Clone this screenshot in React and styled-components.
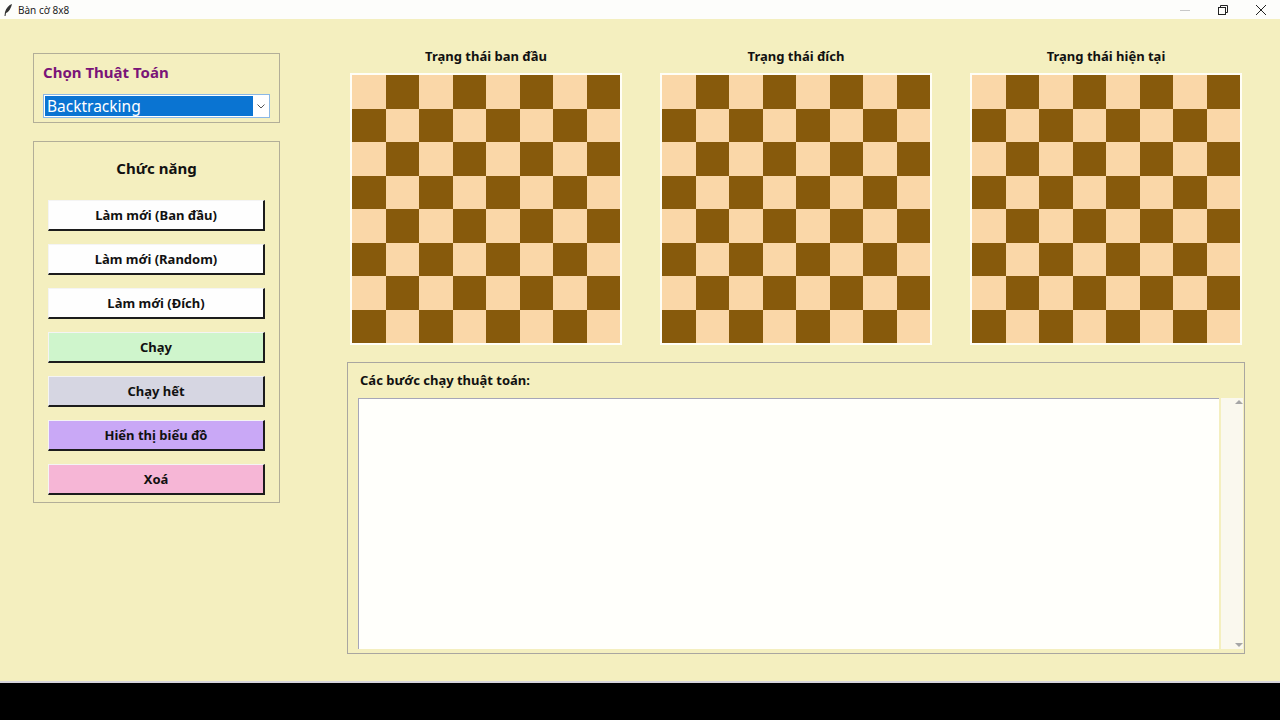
import React from "react";
import styled, { createGlobalStyle } from "styled-components";

const GlobalStyle = createGlobalStyle`
  html, body {
    margin: 0;
    padding: 0;
    background: #000;
  }
  body {
    font-family: "Noto Sans", "Open Sans", sans-serif;
  }
`;

const Window = styled.div`
  width: 1280px;
  height: 720px;
  display: flex;
  flex-direction: column;
  overflow: hidden;
`;

const TitleBar = styled.div`
  height: 19px;
  background: #fdfdfb;
  display: flex;
  align-items: center;
  padding-left: 3px;
  font-family: "Noto Sans", sans-serif;
  font-size: 10px;
  color: #222;
`;

const TitleText = styled.span`
  margin-left: 5px;
`;

const WinControls = styled.div`
  margin-left: auto;
  display: flex;
  height: 100%;
`;

const WinBtn = styled.div`
  width: 38px;
  display: flex;
  align-items: center;
  justify-content: center;
  color: ${(p) => (p.$dim ? "#c8c8c8" : "#222")};
`;

const Body = styled.div`
  height: 662px;
  background: #f4efbf;
  display: flex;
  align-items: flex-start;
`;

const Footer = styled.div`
  height: 37px;
  background: #000;
  border-top: 2px solid #d6d4dc;
`;

const LeftCol = styled.div`
  margin: 34px 0 0 33px;
  width: 247px;
  display: flex;
  flex-direction: column;
  gap: 18px;
`;

const Frame = styled.div`
  border: 1px solid #b2ae98;
  box-sizing: border-box;
`;

const AlgoFrame = styled(Frame)`
  height: 70px;
  padding: 8px 8px 0 9px;
`;

const AlgoLabel = styled.div`
  color: #7a1478;
  font-weight: 700;
  font-size: 15px;
  line-height: 20px;
`;

const Combo = styled.div`
  margin-top: 12px;
  margin-right: 1px;
  height: 24px;
  box-sizing: border-box;
  border: 1px solid #8ab8e6;
  background: #fff;
  display: flex;
  padding: 1px;
`;

const ComboValue = styled.div`
  flex: 1;
  background: #0a74d2;
  color: #fff;
  font-size: 15.5px;
  line-height: 20px;
  padding-left: 2px;
`;

const ComboArrow = styled.div`
  width: 15px;
  display: flex;
  align-items: center;
  justify-content: center;
`;

const FuncFrame = styled(Frame)`
  height: 362px;
  padding: 0 14px;
  display: flex;
  flex-direction: column;
`;

const FuncTitle = styled.div`
  text-align: center;
  font-weight: 700;
  font-size: 15px;
  color: #111;
  margin-top: 15px;
  line-height: 22px;
  height: 43px;
`;

const Buttons = styled.div`
  display: flex;
  flex-direction: column;
  gap: 13px;
`;

const Button = styled.div`
  height: 31px;
  box-sizing: border-box;
  background: ${(p) => p.$bg || "#fefefe"};
  border-top: 1px solid #f4f4f4;
  border-left: 1px solid #f4f4f4;
  border-right: 2px solid #1c1c1c;
  border-bottom: 2px solid #1c1c1c;
  display: flex;
  align-items: center;
  justify-content: center;
  font-weight: 700;
  font-size: 13px;
  color: #111;
`;

const RightCol = styled.div`
  margin: 28px 0 0 67px;
  width: 898px;
  display: flex;
  flex-direction: column;
`;

const BoardsRow = styled.div`
  display: flex;
  gap: 38px;
  padding-left: 3px;
`;

const BoardBlock = styled.div`
  width: 272px;
  display: flex;
  flex-direction: column;
  align-items: center;
`;

const BoardTitle = styled.div`
  font-weight: 700;
  font-size: 13px;
  line-height: 18px;
  color: #111;
  height: 26px;
`;

const Board = styled.div`
  width: 272px;
  height: 272px;
  box-sizing: border-box;
  border: 2px solid #fffef6;
  display: grid;
  grid-template-columns: repeat(8, 1fr);
  grid-template-rows: repeat(8, 1fr);
`;

const Cell = styled.div`
  background: ${(p) => (p.$dark ? "#875a0c" : "#fad7a8")};
`;

const StepsFrame = styled.div`
  margin-top: 17px;
  height: 292px;
  box-sizing: border-box;
  border: 1px solid #a9a6a0;
  display: flex;
  flex-direction: column;
  padding: 8px 0 4px 10px;
`;

const StepsLabel = styled.div`
  font-weight: 700;
  font-size: 13px;
  line-height: 18px;
  color: #111;
  padding-left: 2px;
  height: 27px;
`;

const StepsArea = styled.div`
  flex: 1;
  display: flex;
`;

const TextBox = styled.div`
  width: 864px;
  background: #fffffb;
  border-top: 1px solid #a6a6b8;
  border-left: 1px solid #a6a6b8;
`;

const ScrollBar = styled.div`
  flex: 1;
  margin-left: 2px;
  margin-right: 1px;
  background: #faf8ee;
  display: flex;
  flex-direction: column;
  justify-content: space-between;
  align-items: center;
  padding: 2px 0;
`;

const ScrollArrow = styled.div`
  width: 0;
  height: 0;
  border-left: 4px solid transparent;
  border-right: 4px solid transparent;
  ${(p) =>
    p.$down
      ? "border-top: 4px solid #a6a6a6;"
      : "border-bottom: 4px solid #a6a6a6;"}
  margin-left: 14px;
`;

const Feather = () => (
  <svg width="10" height="14" viewBox="0 0 10 14">
    <path d="M9 1 C6 2 3 5 2 9 L1.5 13 L2.5 13 L3 10 C6 9 8 5 9 1 Z" fill="#333" />
  </svg>
);

const buttons = [
  { label: "Làm mới (Ban đầu)" },
  { label: "Làm mới (Random)" },
  { label: "Làm mới (Đích)" },
  { label: "Chạy", bg: "#cff5cc" },
  { label: "Chạy hết", bg: "#d6d6e2" },
  { label: "Hiển thị biểu đồ", bg: "#c9a8f6" },
  { label: "Xoá", bg: "#f6b6d6" },
];

const boards = ["Trạng thái ban đầu", "Trạng thái đích", "Trạng thái hiện tại"];

const ChessBoard = () => (
  <Board>
    {Array.from({ length: 64 }, (_, i) => {
      const r = Math.floor(i / 8);
      const c = i % 8;
      return <Cell key={i} $dark={(r + c) % 2 === 1} />;
    })}
  </Board>
);

export default function App() {
  return (
    <Window>
      <GlobalStyle />
      <TitleBar>
        <Feather />
        <TitleText>Bàn cờ 8x8</TitleText>
        <WinControls>
          <WinBtn $dim>
            <svg width="10" height="10" viewBox="0 0 10 10">
              <path d="M0 5.5 H10" stroke="currentColor" strokeWidth="1" />
            </svg>
          </WinBtn>
          <WinBtn>
            <svg width="10" height="10" viewBox="0 0 10 10">
              <rect x="0.5" y="2.5" width="7" height="7" fill="none" stroke="currentColor" />
              <path d="M2.5 2.5 V0.5 H9.5 V7.5 H7.5" fill="none" stroke="currentColor" />
            </svg>
          </WinBtn>
          <WinBtn>
            <svg width="10" height="10" viewBox="0 0 10 10">
              <path d="M0 0 L10 10 M10 0 L0 10" stroke="currentColor" strokeWidth="1" />
            </svg>
          </WinBtn>
        </WinControls>
      </TitleBar>
      <Body>
        <LeftCol>
          <AlgoFrame>
            <AlgoLabel>Chọn Thuật Toán</AlgoLabel>
            <Combo>
              <ComboValue>Backtracking</ComboValue>
              <ComboArrow>
                <svg width="8" height="5" viewBox="0 0 8 5">
                  <path d="M0.5 0.5 L4 4 L7.5 0.5" fill="none" stroke="#555" strokeWidth="1" />
                </svg>
              </ComboArrow>
            </Combo>
          </AlgoFrame>
          <FuncFrame>
            <FuncTitle>Chức năng</FuncTitle>
            <Buttons>
              {buttons.map((b) => (
                <Button key={b.label} $bg={b.bg}>
                  {b.label}
                </Button>
              ))}
            </Buttons>
          </FuncFrame>
        </LeftCol>
        <RightCol>
          <BoardsRow>
            {boards.map((t) => (
              <BoardBlock key={t}>
                <BoardTitle>{t}</BoardTitle>
                <ChessBoard />
              </BoardBlock>
            ))}
          </BoardsRow>
          <StepsFrame>
            <StepsLabel>Các bước chạy thuật toán:</StepsLabel>
            <StepsArea>
              <TextBox />
              <ScrollBar>
                <ScrollArrow />
                <ScrollArrow $down />
              </ScrollBar>
            </StepsArea>
          </StepsFrame>
        </RightCol>
      </Body>
      <Footer />
    </Window>
  );
}
